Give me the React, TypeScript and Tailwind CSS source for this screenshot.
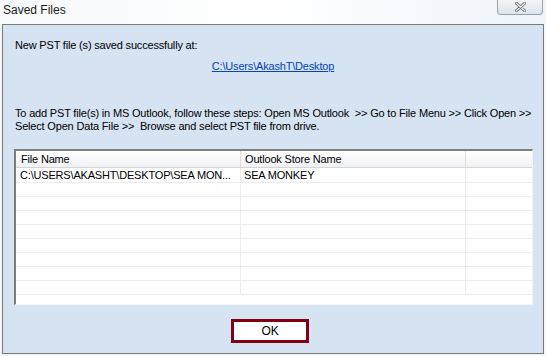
import React from "react";

const rows = [
  { file: "C:\\USERS\\AKASHT\\DESKTOP\\SEA MON...", store: "SEA MONKEY" },
  { file: "", store: "" },
  { file: "", store: "" },
  { file: "", store: "" },
  { file: "", store: "" },
  { file: "", store: "" },
  { file: "", store: "" },
  { file: "", store: "" },
  { file: "", store: "" },
];

const ui = { fontFamily: '"Liberation Sans", Arial, sans-serif' };

const App = () => {
  return (
    <div className="w-[546px] h-[356px] bg-[#f4f7fa] flex flex-col overflow-hidden" style={ui}>
      {/* title bar */}
      <div className="h-[24px] flex items-start justify-between bg-gradient-to-r from-[#f7f9fb] via-[#ffffff] to-[#eef4f9]">
        <span className="pl-[3px] pt-[3px] text-[12px] leading-[14px] text-[#1a1a1a]">Saved Files</span>
        <div className="mr-[3px] w-[46px] h-[15px] border border-t-0 border-[#9aa3ad] rounded-b-[4px] bg-gradient-to-b from-[#f2f4f6] to-[#dfe4e9] flex items-center justify-center">
          <svg width="11" height="10" viewBox="0 0 11 10">
            <path d="M1 1 L10 9 M10 1 L1 9" stroke="#6b7077" strokeWidth="3" strokeLinecap="round" />
            <path d="M1 1 L10 9 M10 1 L1 9" stroke="#f4f4f4" strokeWidth="1.2" strokeLinecap="round" />
          </svg>
        </div>
      </div>

      {/* content panel */}
      <div className="mx-[2px] h-[330px] border border-[#7a7a7a] bg-[#d5e3f2] flex flex-col text-[11px] tracking-[-0.18px] text-black">
        <div className="pl-[12px] pt-[14px] leading-[13px]">New PST file (s) saved successfully at:</div>
        <div className="pt-[8px] text-center leading-[13px]">
          <span className="text-[#0645ad] underline">C:\Users\AkashT\Desktop</span>
        </div>
        <div className="pl-[12px] pt-[34px] leading-[13px] whitespace-nowrap">
          <div>To add PST file(s) in MS Outlook, follow these steps: Open MS Outlook &nbsp;&gt;&gt; Go to File Menu &gt;&gt; Click Open &gt;&gt;</div>
          <div>Select Open Data File &gt;&gt; &nbsp;Browse and select PST file from drive.</div>
        </div>

        {/* list view */}
        <div className="ml-[11px] mt-[16px] w-[519px] h-[156px] border-t-2 border-l-2 border-r border-b border-t-[#7d7d7d] border-l-[#7d7d7d] border-r-[#f4f4f4] border-b-[#f4f4f4] bg-white flex flex-col overflow-hidden">
          <div className="h-[17px] flex bg-gradient-to-b from-[#ffffff] to-[#f1f2f4] border-b border-[#d5d5d5]">
            <div className="w-[225px] pl-[5px] leading-[17px] border-r border-[#dcdcdc]">File Name</div>
            <div className="w-[225px] pl-[4px] leading-[17px] border-r border-[#dcdcdc]">Outlook Store Name</div>
            <div className="flex-1" />
          </div>
          {rows.map((r, i) => (
            <div key={i} className={`flex border-b border-[#ececec] ${i === 0 ? "h-[15px]" : "h-[14px]"}`}>
              <div className="w-[225px] pl-[4px] leading-[14px] border-r border-[#ececec] whitespace-nowrap overflow-hidden">{r.file}</div>
              <div className="w-[225px] pl-[3px] leading-[14px] border-r border-[#ececec]">{r.store}</div>
              <div className="flex-1" />
            </div>
          ))}
        </div>

        <div className="flex justify-center pt-[14px] pr-[6px]">
          <button className="w-[78px] h-[24px] border-[3px] border-[#820014] bg-white text-[12px] leading-[18px] text-black">OK</button>
        </div>
      </div>
    </div>
  );
};

export default App;
